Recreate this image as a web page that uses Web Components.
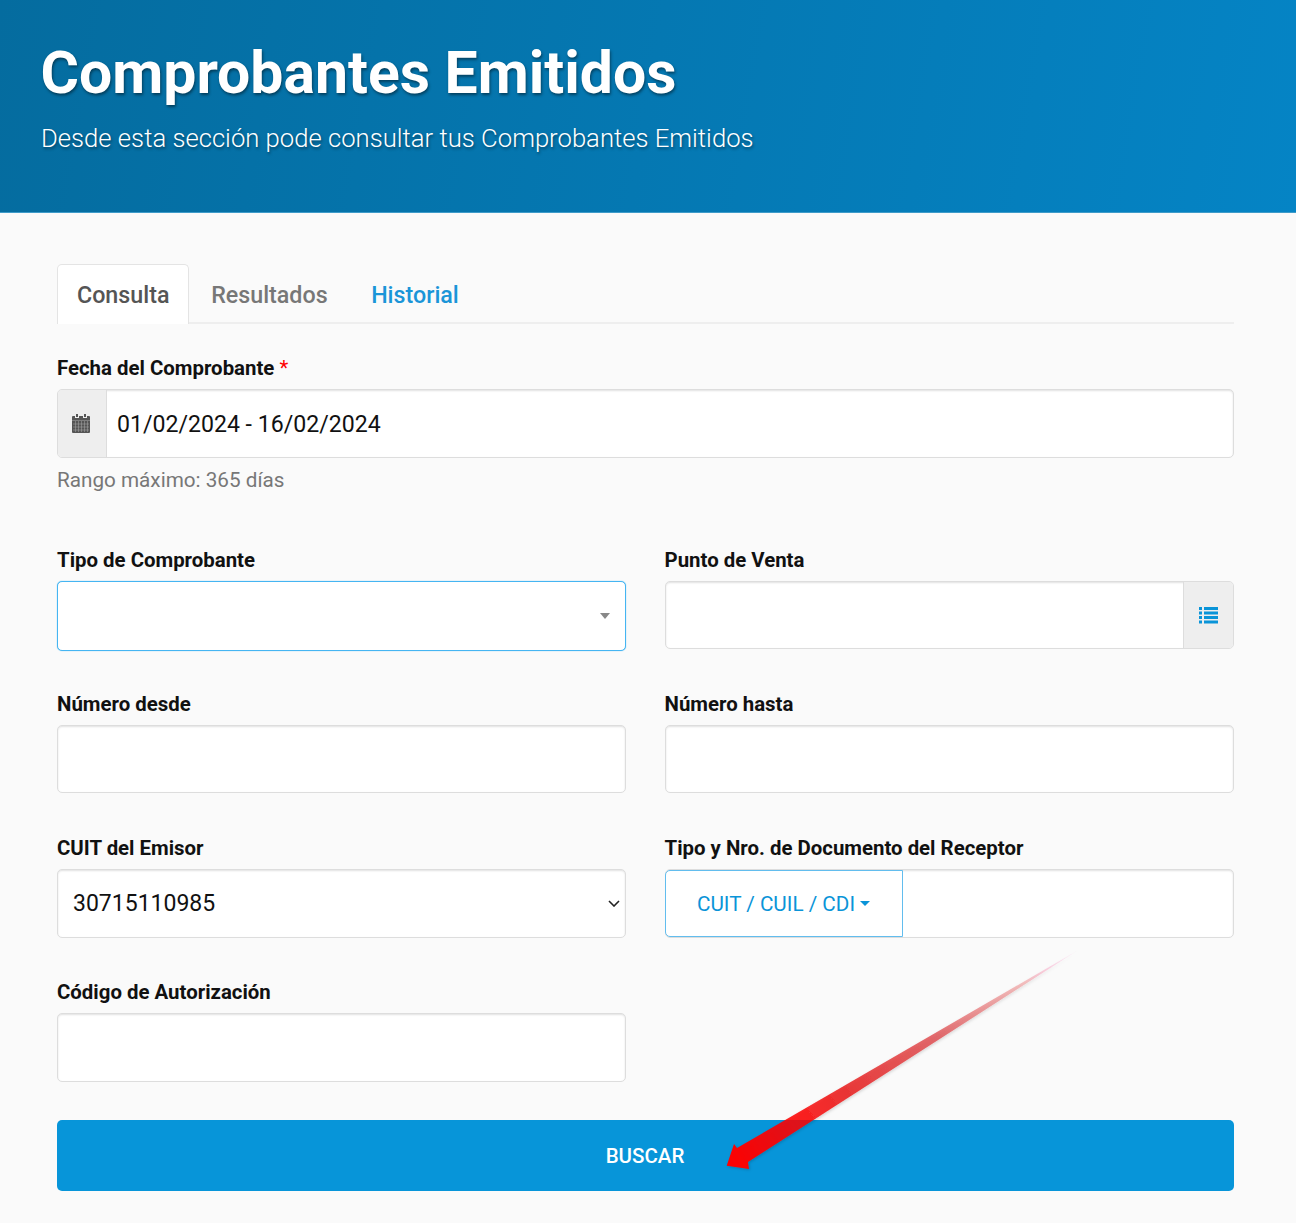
<!DOCTYPE html>
<html lang="es">
<head>
<meta charset="utf-8">
<title>Comprobantes Emitidos</title>
<style>
  html, body { margin: 0; padding: 0; background: #fafafa; }
  body { font-family: Roboto, "Liberation Sans", sans-serif; color: #111; }
</style>
</head>
<body>
<consulta-page>
  <page-header slot="header" heading="Comprobantes Emitidos" sub="Desde esta sección pode consultar tus Comprobantes Emitidos"></page-header>
  <tab-bar></tab-bar>
  <form-field label="Fecha del Comprobante" required help="Rango máximo: 365 días" class="full">
    <field-box>
      <field-addon slot="before" kind="calendar"></field-addon>
      <span class="date">01/02/2024 - 16/02/2024</span>
    </field-box>
  </form-field>
  <form-grid>
    <form-field label="Tipo de Comprobante"><combo-box></combo-box></form-field>
    <form-field label="Punto de Venta">
      <field-box style="--h: 68px"><field-addon slot="after" kind="list"></field-addon></field-box>
    </form-field>
    <form-field label="Número desde"><field-box style="--h: 68px"></field-box></form-field>
    <form-field label="Número hasta"><field-box style="--h: 68px"></field-box></form-field>
    <form-field label="CUIT del Emisor"><select-box value="30715110985"></select-box></form-field>
    <form-field label="Tipo y Nro. de Documento del Receptor">
      <field-box><doc-button slot="before">CUIT / CUIL / CDI</doc-button></field-box>
    </form-field>
    <form-field label="Código de Autorización"><field-box></field-box></form-field>
  </form-grid>
  <search-button>BUSCAR</search-button>
  <red-arrow></red-arrow>
</consulta-page>

<script>
  function define(name, css, html, setup) {
    customElements.define(
      name,
      class extends HTMLElement {
        constructor() {
          super();
          this.attachShadow({ mode: "open" });
          this.shadowRoot.innerHTML = `<style>${css}</style>${html}`;
          if (setup) setup(this, this.shadowRoot);
        }
      }
    );
  }

  define(
    "consulta-page",
    `
    :host { display: block; position: relative; height: 1223px; overflow: hidden; }
    main { padding: 0 62px 0 57px; }
    `,
    `<slot name="header"></slot><main><slot></slot></main>`
  );

  define(
    "page-header",
    `
    :host {
      display: block; box-sizing: border-box; height: 213px; padding: 37px 41px 0;
      background: linear-gradient(100deg, #056c9f 0%, #0584c5 100%);
      border-bottom: 1px solid #3e9bc9;
      color: #fff;
    }
    h1 {
      margin: 0 0 0 -.5px; font-size: 58.9px; line-height: 72px; font-weight: 700;
      text-shadow: 1px 2px 3px rgba(0,0,0,.45);
    }
    p {
      margin: 13px 0 0; font-size: 25.66px; line-height: 32px; font-weight: 300;
      text-shadow: 1px 2px 3px rgba(0,0,0,.4);
    }
    `,
    `<h1></h1><p></p>`,
    (el, root) => {
      root.querySelector("h1").textContent = el.getAttribute("heading");
      root.querySelector("p").textContent = el.getAttribute("sub");
    }
  );

  define(
    "tab-bar",
    `
    :host {
      display: flex; margin: 51px 0 33px; height: 60px; box-sizing: border-box;
      border-bottom: 2px solid #eee; font-size: 23.25px; font-weight: 500;
    }
    .tab { padding: 1px 22.5px 0 21px; height: 60px; box-sizing: border-box; line-height: 60px; color: #777; }
    .active {
      padding: 1px 19px 0 19px; line-height: 58px; color: #555; background: #fff; margin-right: .75px;
      border: 1px solid #e4e4e4; border-bottom: 0; border-radius: 5px 5px 0 0;
    }
    .link { color: #1a95d8; }
    `,
    `<div class="tab active">Consulta</div><div class="tab">Resultados</div><div class="tab link">Historial</div>`
  );

  define(
    "form-field",
    `
    :host { display: block; }
    label { display: block; position: relative; top: -1px; font-size: 20.4px; line-height: 24px; font-weight: 700; margin-bottom: 8px; color: #111; }
    i { font-style: normal; color: #f00; font-weight: 400; }
    .help { margin-top: 10px; font-size: 20.7px; line-height: 24px; color: #777; }
    `,
    `<label></label><slot></slot><div class="help" hidden></div>`,
    (el, root) => {
      const label = root.querySelector("label");
      label.textContent = el.getAttribute("label");
      if (el.hasAttribute("required")) {
        const star = document.createElement("i");
        star.textContent = " *";
        label.appendChild(star);
      }
      if (el.hasAttribute("help")) {
        const help = root.querySelector(".help");
        help.hidden = false;
        help.textContent = el.getAttribute("help");
      }
    }
  );

  define(
    "form-grid",
    `
    :host {
      display: grid; grid-template-columns: 569px 569.5px; column-gap: 38.5px; row-gap: 43px;
      margin-top: 57px;
    }
    `,
    `<slot></slot>`
  );

  // some rows of the form are a pixel shorter, --h keeps the row pitch the same
  define(
    "field-box",
    `
    :host {
      display: flex; align-items: stretch; box-sizing: border-box; height: var(--h, 69px);
      margin-bottom: calc(69px - var(--h, 69px));
      background: #fff; border: 1px solid #ddd; border-radius: 5px;
      box-shadow: inset 0 1px 2px rgba(0,0,0,.12);
      font-size: 23.1px; color: #111;
    }
    .grow { flex: 1; display: flex; align-items: center; padding: 1px 0 0 10px; }
    `,
    `<slot name="before"></slot><div class="grow"><slot></slot></div><slot name="after"></slot>`
  );

  define(
    "field-addon",
    `
    :host {
      display: flex; align-items: center; justify-content: center; box-sizing: border-box;
      width: 50px; background: #eee; flex: none;
    }
    :host([slot="before"]) { width: 49px; padding: 0 3px 1px 0; border-right: 1px solid #ddd; border-radius: 4px 0 0 4px; }
    :host([slot="after"]) { border-left: 1px solid #ddd; border-radius: 0 4px 4px 0; }
    svg { display: block; }
    `,
    `<span></span>`,
    (el, root) => {
      const icons = {
        calendar: `<svg width="18" height="19" viewBox="0 0 18 19">
          <path fill="#555" d="M4 0h2v3H4zM12 0h2v3h-2zM1 2h2v2h4V2h4v2h4V2h2a1 1 0 0 1 1 1v15a1 1 0 0 1-1 1H1a1 1 0 0 1-1-1V3a1 1 0 0 1 1-1z"/>
          <path stroke="#aaa" stroke-width=".5" fill="none" d="M0 6.5h18M1 10h16M1 13h16M1 16h16M3.5 7v11M6.5 7v11M9.5 7v11M12.5 7v11M15.5 7v11"/>
        </svg>`,
        list: `<svg width="19" height="17" viewBox="0 0 19 17" fill="#0a94d8">
          <path d="M0 0h3v3H0zM5 0h14v3H5zM0 4.5h3v3H0zM5 4.5h14v3H5zM0 9h3v3H0zM5 9h14v3H5zM0 13.5h3v3H0zM5 13.5h14v3H5z"/>
        </svg>`,
      };
      root.querySelector("span").innerHTML = icons[el.getAttribute("kind")];
    }
  );

  define(
    "combo-box",
    `
    :host {
      display: block; box-sizing: border-box; height: 70px; margin-bottom: -1px; position: relative;
      background: #fff; border: 1px solid #45b5f2; border-radius: 5px;
      box-shadow: 0 0 1px #45b5f2;
    }
    .caret {
      position: absolute; right: 15px; top: 31px; width: 0; height: 0;
      border: 5px solid transparent; border-top: 6px solid #888; border-bottom: 0;
    }
    `,
    `<span class="caret"></span>`
  );

  define(
    "select-box",
    `
    :host { display: block; position: relative; }
    select {
      display: block; width: 100%; height: 69px; box-sizing: border-box; padding: 0 15px;
      appearance: none; -webkit-appearance: none;
      background: #fff; border: 1px solid #ddd; border-radius: 5px; outline: 0;
      box-shadow: inset 0 1px 2px rgba(0,0,0,.12);
      font: 400 23px Roboto, "Liberation Sans", sans-serif; color: #111;
    }
    svg { position: absolute; right: 6px; top: 31px; pointer-events: none; }
    `,
    `<select><option></option></select>
    <svg width="12" height="7" viewBox="0 0 12 7"><path d="M1 1l5 5 5-5" fill="none" stroke="#222" stroke-width="1.6"/></svg>`,
    (el, root) => {
      root.querySelector("option").textContent = el.getAttribute("value");
    }
  );

  define(
    "doc-button",
    `
    :host {
      display: flex; align-items: center; justify-content: center; gap: 5px; box-sizing: border-box;
      flex: none; width: 238px; margin: 0 0 0 -1px; background: #fff;
      border: 1px solid #62bdee; border-radius: 5px 0 0 5px;
      font-size: 20.7px; color: #0a94d8;
    }
    .caret { width: 0; height: 0; border: 5px solid transparent; border-top: 5px solid #0a94d8; border-bottom: 0; }
    `,
    `<span><slot></slot></span><span class="caret"></span>`
  );

  define(
    "search-button",
    `
    :host {
      display: flex; align-items: center; justify-content: center; height: 71px; margin-top: 38px;
      box-sizing: border-box; padding: 1px 1px 0 0;
      background: #0795d9; border-radius: 5px; color: #fff; font-size: 20.5px; font-weight: 500;
    }
    `,
    `<slot></slot>`
  );

  define(
    "red-arrow",
    `
    :host { position: absolute; left: 700px; top: 930px; width: 400px; height: 260px; pointer-events: none; }
    svg { display: block; overflow: visible; }
    `,
    `<svg width="400" height="260" viewBox="700 930 400 260">
      <defs>
        <linearGradient id="fade" gradientUnits="userSpaceOnUse" x1="727" y1="1166" x2="1078" y2="950">
          <stop offset="0" stop-color="#f00"/>
          <stop offset=".2" stop-color="#f00" stop-opacity=".85"/>
          <stop offset=".35" stop-color="#e81c1c" stop-opacity=".85"/>
          <stop offset=".6" stop-color="#dc3a3e" stop-opacity=".72"/>
          <stop offset=".85" stop-color="#e88" stop-opacity=".5"/>
          <stop offset="1" stop-color="#f4b" stop-opacity="0"/>
        </linearGradient>
        <filter id="soft" x="-10%" y="-10%" width="120%" height="120%">
          <feDropShadow dx="1" dy="1" stdDeviation="1.5" flood-color="#000" flood-opacity=".2"/>
        </filter>
      </defs>
      <polygon filter="url(#soft)" fill="url(#fade)"
        points="726.7,1165.7 734,1144 737,1148 1080,949 748,1162 749,1169"/>
    </svg>`
  );
</script>
</body>
</html>
